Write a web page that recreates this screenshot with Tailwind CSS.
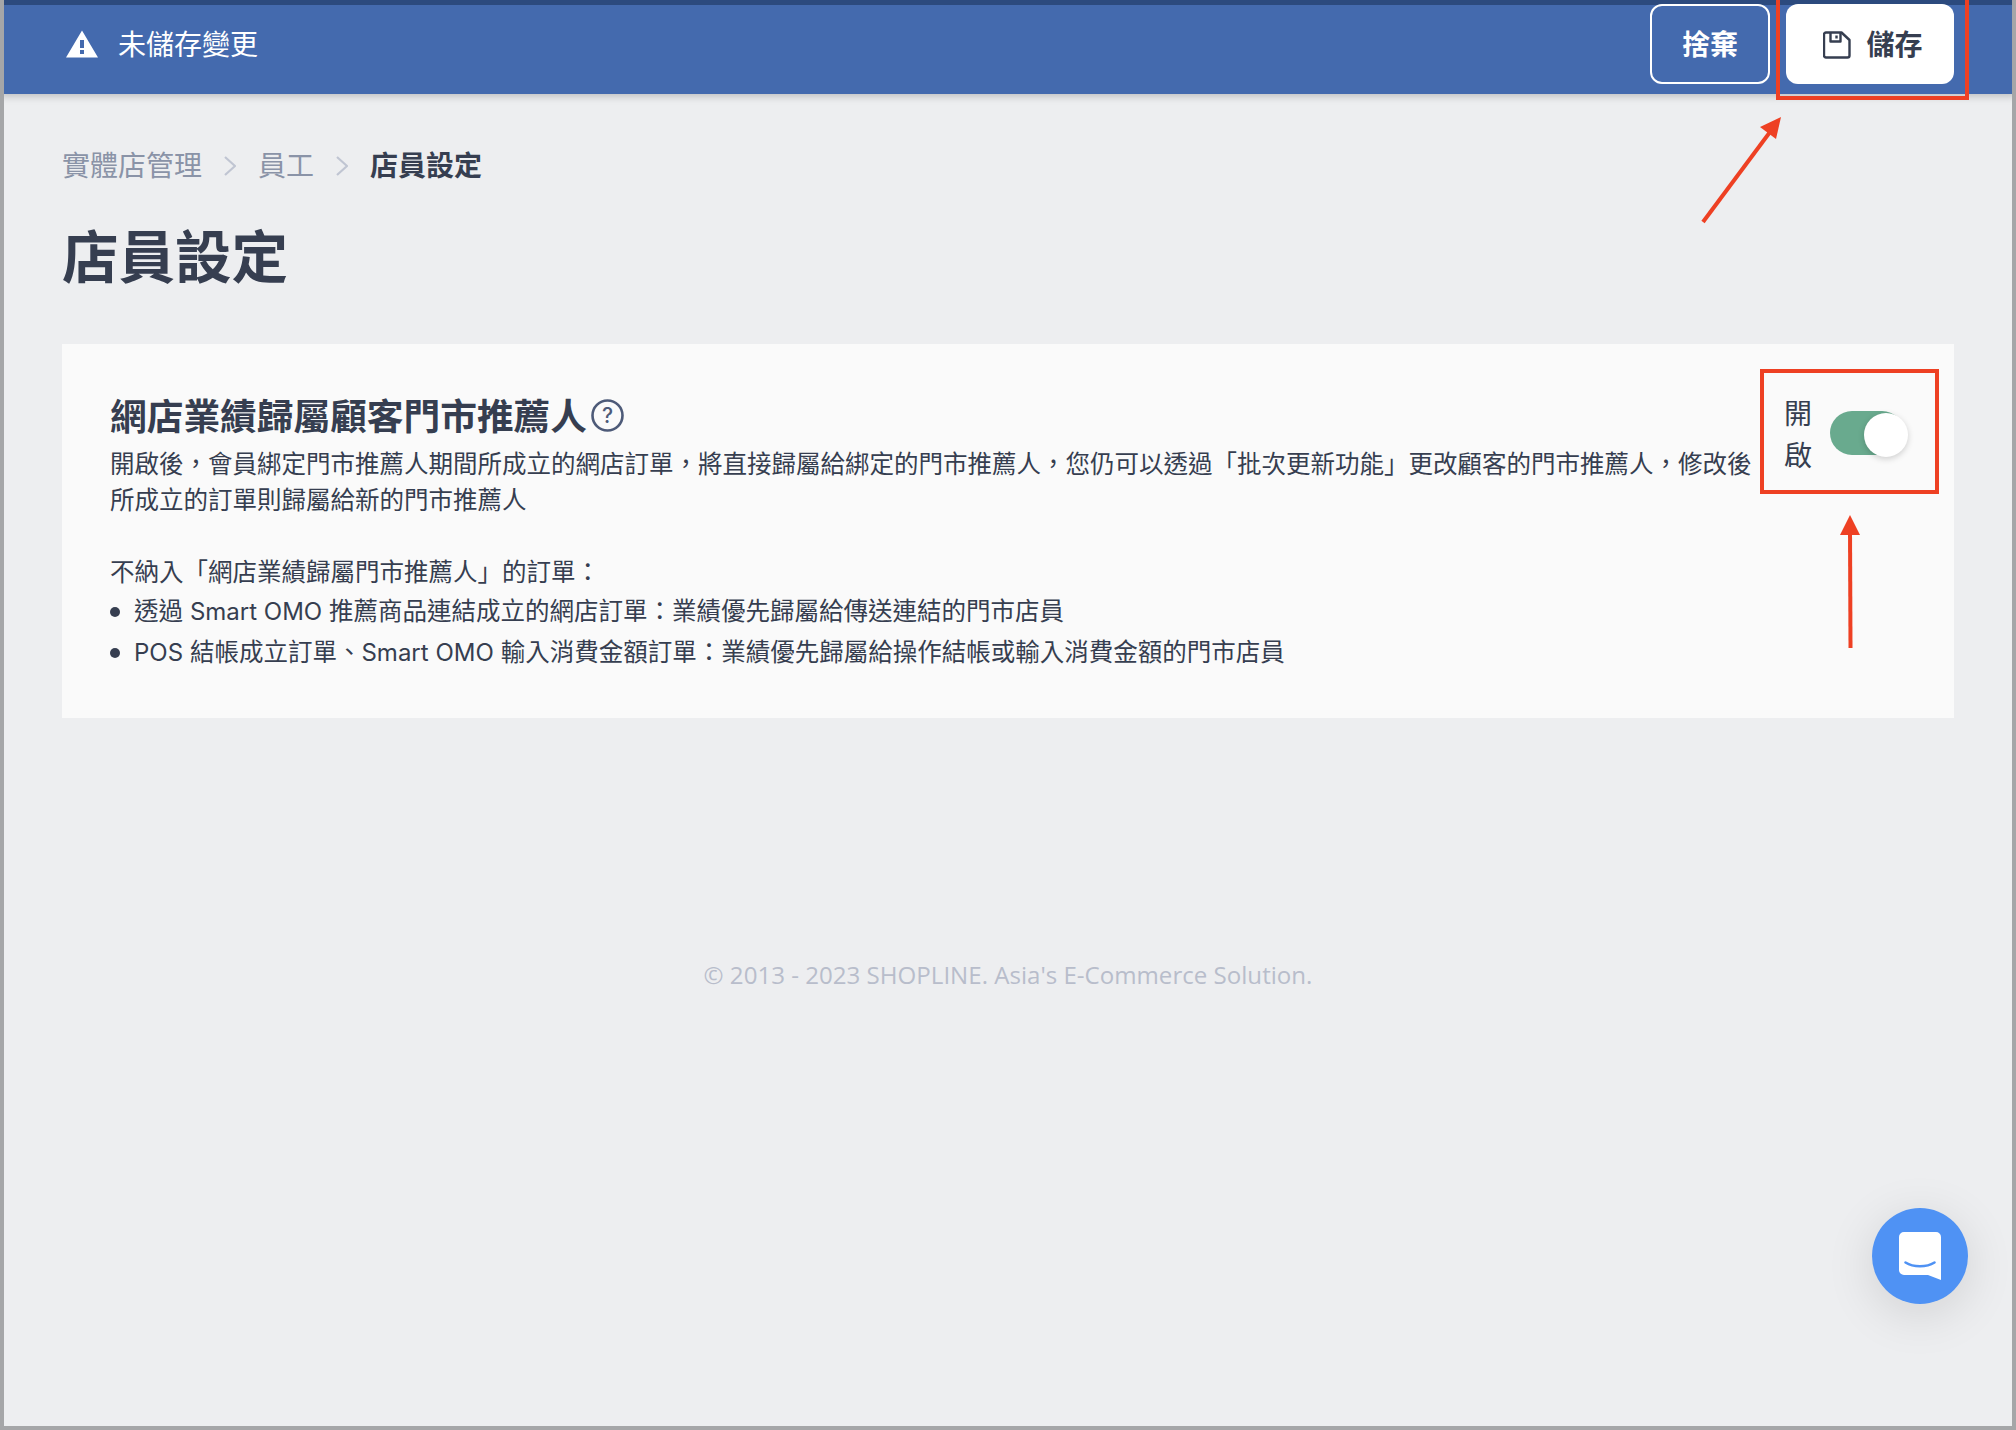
<!DOCTYPE html>
<html lang="zh-Hant">
  <head>
    <meta charset="utf-8" />
    <title>店員設定</title>
    <script src="https://cdn.jsdelivr.net/npm/@tailwindcss/browser@4"></script>
  </head>
  <body class="bg-[#edeef0]">
    <div class="relative w-[2016px] h-[1430px] overflow-hidden flex flex-col bg-[#edeef0] border-x-4 border-b-4 border-[#a5a6a8] font-['Inter','Noto_Sans_CJK_TC',sans-serif] text-[#363e50]">
      <!-- unsaved changes bar -->
      <div class="-mx-1 h-[94px] shrink-0 flex items-start justify-between bg-[#446aae] border-x-4 border-t-[5px] border-[#2c4a7e] pl-[62px] pr-[58px] shadow-[0_2px_8px_rgba(0,0,0,0.22)] z-10">
        <div class="flex items-center gap-[20px] h-[79px] text-white text-[28px]">
          <svg class="w-[32px] h-[28px] -mt-px" viewBox="0 0 32 28">
            <path fill="#fff" fill-rule="evenodd" d="M16 0.5 32 27.5H0ZM14 10v8h4v-8ZM14 20v4h4v-4Z" />
          </svg>
          <span>未儲存變更</span>
        </div>
        <div class="flex gap-4 -mt-px">
          <button class="w-[120px] h-[80px] pt-px rounded-[12px] border-2 border-white text-white text-[28px] font-bold">捨棄</button>
          <button class="w-[168px] h-[80px] pl-[6px] pt-px rounded-[12px] bg-white text-[28px] font-bold flex items-center justify-center gap-[15px]">
            <svg class="w-[28px] h-[28px]" viewBox="0 0 28 28" fill="none" stroke="#363e50" stroke-width="2.4" stroke-linejoin="round">
              <path d="M3 1.5h15.5L26.5 9v15.5a2 2 0 0 1-2 2H3a2 2 0 0 1-2-2v-21a2 2 0 0 1 2-2Z" />
              <path d="M7.5 1.5v9h10v-9" />
              <path d="M13.5 4.5v3" />
            </svg>
            <span>儲存</span>
          </button>
        </div>
      </div>

      <div class="px-[58px]">
        <!-- breadcrumb -->
        <div class="mt-[52px] h-[40px] flex items-center text-[28px] text-[#8a93a7]">
          <span>實體店管理</span>
          <svg class="w-[12px] h-[20px] ml-[22px] mr-[22px]" viewBox="0 0 12 20" fill="none" stroke="#c0c5d2" stroke-width="2.2"><path d="M1 1l10 9-10 9" /></svg>
          <span>員工</span>
          <svg class="w-[12px] h-[20px] ml-[22px] mr-[22px]" viewBox="0 0 12 20" fill="none" stroke="#c0c5d2" stroke-width="2.2"><path d="M1 1l10 9-10 9" /></svg>
          <span class="font-bold text-[#363e50]">店員設定</span>
        </div>

        <h1 class="mt-[37px] h-[70px] leading-[70px] text-[56.5px] font-bold">店員設定</h1>

        <!-- setting card -->
        <div class="mt-[51px] h-[374px] bg-[#fafafa] flex pl-[48px]">
          <div class="w-[1650px] pt-[51px] text-[24.5px] leading-[36.75px]">
            <div class="flex items-center h-[44px] gap-[4px]">
              <h2 class="text-[36.7px] leading-[44px] font-bold">網店業績歸屬顧客門市推薦人</h2>
              <svg class="w-[33px] h-[33px] -mt-[4px]" viewBox="0 0 33 33" fill="none">
                <circle cx="16.5" cy="16.5" r="15" stroke="#4d5a78" stroke-width="2.6" />
                <text x="16.5" y="24" text-anchor="middle" font-size="21" font-weight="500" fill="#4d5a78" font-family="Inter, sans-serif">?</text>
              </svg>
            </div>
            <p class="mt-[6.5px]">開啟後，會員綁定門市推薦人期間所成立的網店訂單，將直接歸屬給綁定的門市推薦人，您仍可以透過「批次更新功能」更改顧客的門市推薦人，修改後所成立的訂單則歸屬給新的門市推薦人</p>
            <p class="mt-[34.5px]">不納入「網店業績歸屬門市推薦人」的訂單：</p>
            <ul class="mt-[3px] flex flex-col gap-[3.3px]">
              <li class="flex items-center gap-[20px]"><span class="w-[10px] h-[10px] rounded-full bg-[#363e50]"></span><span class="-ml-[6px]">透過 <span class="text-[24px]">Smart OMO</span> 推薦商品連結成立的網店訂單：業績優先歸屬給傳送連結的門市店員</span></li>
              <li class="flex items-center gap-[20px]"><span class="w-[10px] h-[10px] rounded-full bg-[#363e50]"></span><span class="-ml-[6px]"><span class="text-[24px]">POS</span> 結帳成立訂單、<span class="text-[24px]">Smart OMO</span> 輸入消費金額訂單：業績優先歸屬給操作結帳或輸入消費金額的門市店員</span></li>
            </ul>
          </div>
          <!-- toggle -->
          <div class="ml-[22px] mt-[44px] h-[90px] flex items-center gap-[16px]">
            <span class="w-[31px] pl-px pt-[4px] text-center text-[28px] leading-[42px] text-[#363e50]">開啟</span>
            <span class="relative block w-[74px] h-[44px] ml-px rounded-full bg-[#69aa8e]">
              <span class="absolute left-[34px] top-[2px] w-[44px] h-[44px] rounded-full bg-white shadow-[0_2px_6px_rgba(0,0,0,0.18)]"></span>
            </span>
          </div>
        </div>

        <p class="mt-[237px] h-[40px] leading-[40px] text-center text-[24.1px] text-[#b8bdcb] font-['Open_Sans','Noto_Sans_CJK_TC',sans-serif]">© 2013 - 2023 SHOPLINE. Asia's E-Commerce Solution.</p>
      </div>

      <!-- chat launcher -->
      <div class="absolute left-[1868px] top-[1208px] w-[96px] h-[96px] rounded-full bg-[#4f92f4] shadow-[0_10px_50px_rgba(0,0,0,0.12)] flex items-center justify-center">
        <svg class="w-[42px] h-[48px]" viewBox="0 0 42 48">
          <path fill="#fff" d="M5 0h32a5 5 0 0 1 5 5v43l-13-5H5a5 5 0 0 1-5-5V5a5 5 0 0 1 5-5Z" />
          <path fill="none" stroke="#4f92f4" stroke-width="2.6" stroke-linecap="round" d="M6.5 30.5c8 5 21 5 29 0" />
        </svg>
      </div>

      <!-- red annotations drawn over the screenshot -->
      <svg class="absolute left-[-4px] top-0 w-[2016px] h-[1430px] pointer-events-none z-20" viewBox="0 0 2016 1430" fill="none">
        <rect x="1778" y="-4" width="189" height="102" stroke="#ee4023" stroke-width="4" />
        <rect x="1762" y="371" width="175" height="121" stroke="#ee4023" stroke-width="4" />
        <path d="M1703 222 1770 132" stroke="#ee4023" stroke-width="4" />
        <path d="M1781 117 1776 139 1760 127Z" fill="#ee4023" />
        <path d="M1850.5 648 1850 530" stroke="#ee4023" stroke-width="4" />
        <path d="M1850 515 1860 535 1840 535Z" fill="#ee4023" />
      </svg>
    </div>
  </body>
</html>
